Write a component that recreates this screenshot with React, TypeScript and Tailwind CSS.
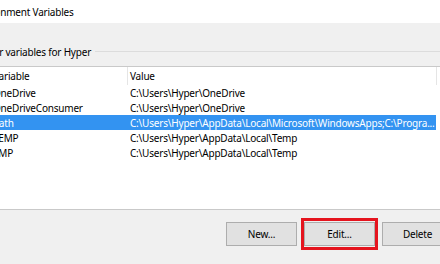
const rows = [
  { name: "OneDrive", value: "C:\\Users\\Hyper\\OneDrive" },
  { name: "OneDriveConsumer", value: "C:\\Users\\Hyper\\OneDrive" },
  { name: "Path", value: "C:\\Users\\Hyper\\AppData\\Local\\Microsoft\\WindowsApps;C:\\Progra...", selected: true },
  { name: "TEMP", value: "C:\\Users\\Hyper\\AppData\\Local\\Temp" },
  { name: "TMP", value: "C:\\Users\\Hyper\\AppData\\Local\\Temp" },
];

export default function App() {
  return (
    <div className="relative h-[264px] w-[440px] overflow-hidden bg-[#f0f0f0] text-[10px] leading-none tracking-[-0.2px] text-black [font-family:'Noto_Sans',sans-serif]">
      {/* title bar */}
      <div className="flex h-[23px] items-center bg-white pt-px">
        <span className="-ml-[28px] shrink-0 whitespace-nowrap">Environment Variables</span>
      </div>

      {/* group box label */}
      <div className="flex h-[43px] items-center pt-[14px]">
        <div className="flex w-full items-center">
          <span className="-ml-[18px] shrink-0 whitespace-nowrap">User variables for Hyper</span>
          <div className="ml-[4px] h-px flex-1 bg-[#dcdcdc]" />
        </div>
      </div>

      {/* list view */}
      <div className="h-[144px] border-y border-[#c9c9c9] bg-white">
        <div className="relative flex h-[18px] items-center">
          <span className="-ml-[7px] w-[137px] shrink-0 whitespace-nowrap">Variable</span>
          <span className="shrink-0 whitespace-nowrap">Value</span>
          <div className="absolute left-[127px] top-0 h-[18px] w-px bg-[#e5e5e5]" />
          <div className="absolute left-[436px] top-0 h-[18px] w-px bg-[#e5e5e5]" />
        </div>
        {rows.map((r) => (
          <div
            key={r.name}
            className={`flex h-[15px] w-[436px] items-center overflow-hidden ${r.selected ? "bg-[#3393f1] text-white" : ""}`}
          >
            <span className="-ml-[7px] w-[137px] shrink-0 whitespace-nowrap">{r.name}</span>
            <span className="shrink-0 whitespace-nowrap">{r.value}</span>
          </div>
        ))}
      </div>

      {/* buttons */}
      <div className="flex gap-[7px] pl-[226px] pt-[12px]">
        <button className="h-[24px] w-[71px] shrink-0 border border-[#adadad] bg-[#e1e1e1]">New...</button>
        <div className="relative shrink-0">
          <button className="h-[24px] w-[71px] border border-[#adadad] bg-[#e1e1e1]">Edit...</button>
          <div className="absolute -bottom-[4px] -left-[3px] -right-[3px] -top-[4px] border-[3px] border-[#e5141e]" />
        </div>
        <button className="h-[24px] w-[71px] shrink-0 border border-[#adadad] bg-[#e1e1e1]">Delete</button>
      </div>
    </div>
  );
}
